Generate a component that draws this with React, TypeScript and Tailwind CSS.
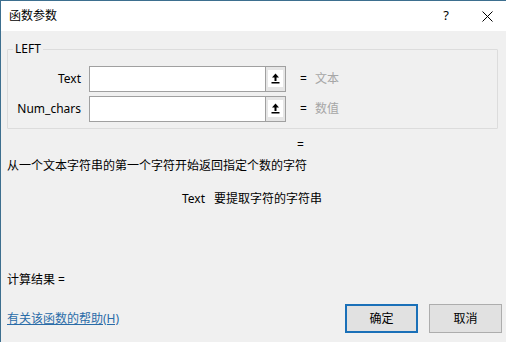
const font = { fontFamily: '"Noto Sans", "Noto Sans CJK SC", sans-serif' };

function ArgRow({ label, hint }: { label: string; hint: string }) {
  return (
    <div className="flex items-center h-[26px]">
      <div className="w-[73px] text-right text-[12px] text-black">{label}</div>
      <div className="ml-[8px] w-[176px] h-[26px] bg-white border border-[#a0a0a0] border-r-0" />
      <div className="w-[21px] h-[26px] bg-[#e6e6e6] border border-[#a0a0a0] flex items-start justify-center pt-[3px]">
        <div className="w-[15px] h-[17px] bg-white flex items-center justify-center">
          <svg width="9" height="11" viewBox="0 0 9 11">
            <path d="M4.5 0.5 L8 4.5 H5.5 V8 H3.5 V4.5 H1 Z" fill="#000" />
            <rect x="0.5" y="9" width="8" height="1.5" fill="#000" />
          </svg>
        </div>
      </div>
      <div className="ml-[14px] text-[12px] text-black">=</div>
      <div className="ml-[8px] text-[12px] text-[#a6a6a6]">{hint}</div>
    </div>
  );
}

export default function App() {
  return (
    <div className="w-[506px] h-[342px] bg-[#f0f0f0] border-l border-t border-[#3d6f8f] flex flex-col overflow-hidden" style={font}>
      {/* title bar */}
      <div className="h-[30px] bg-white flex items-center shrink-0">
        <div className="ml-[8px] text-[12px] text-black">函数参数</div>
        <div className="ml-auto mr-[33px] text-[13px] text-black">?</div>
        <svg className="mr-[13px]" width="11" height="11" viewBox="0 0 11 11">
          <path d="M0.5 0.5 L10.5 10.5 M10.5 0.5 L0.5 10.5" stroke="#000" strokeWidth="1" />
        </svg>
      </div>

      {/* group box */}
      <div className="relative mt-[18px] ml-[6px] mr-[8px] h-[80px] border border-[#dcdcdc] rounded-[1px]">
        <div className="absolute -top-[10px] left-[5px] px-[2px] bg-[#f0f0f0] text-[12px] text-black leading-[18px]">LEFT</div>
        <div className="mt-[16px] flex flex-col gap-[4px]">
          <ArgRow label="Text" hint="文本" />
          <ArgRow label="Num_chars" hint="数值" />
        </div>
      </div>

      <div className="ml-[296px] mt-[8px] text-[12px] text-black leading-[16px]">=</div>
      <div className="ml-[6px] mt-[5px] text-[12px] text-black leading-[16px]">从一个文本字符串的第一个字符开始返回指定个数的字符</div>
      <div className="ml-[181px] mt-[17px] text-[12px] text-black leading-[16px] flex">
        <span>Text</span>
        <span className="ml-[9px]">要提取字符的字符串</span>
      </div>

      <div className="ml-[6px] mt-[65px] text-[12px] text-black leading-[16px]">计算结果 =</div>

      <div className="mt-[16px] flex items-center">
        <a className="ml-[6px] text-[12px] text-[#2a6ca8] underline leading-[16px]" href="#">有关该函数的帮助(H)</a>
        <div className="ml-auto flex gap-[11px] mr-[4px]">
          <button className="w-[73px] h-[29px] bg-[#e1e1e1] border-2 border-[#1a70b8] text-[12px] text-black">确定</button>
          <button className="w-[73px] h-[29px] bg-[#e1e1e1] border border-[#adadad] text-[12px] text-black">取消</button>
        </div>
      </div>
    </div>
  );
}
